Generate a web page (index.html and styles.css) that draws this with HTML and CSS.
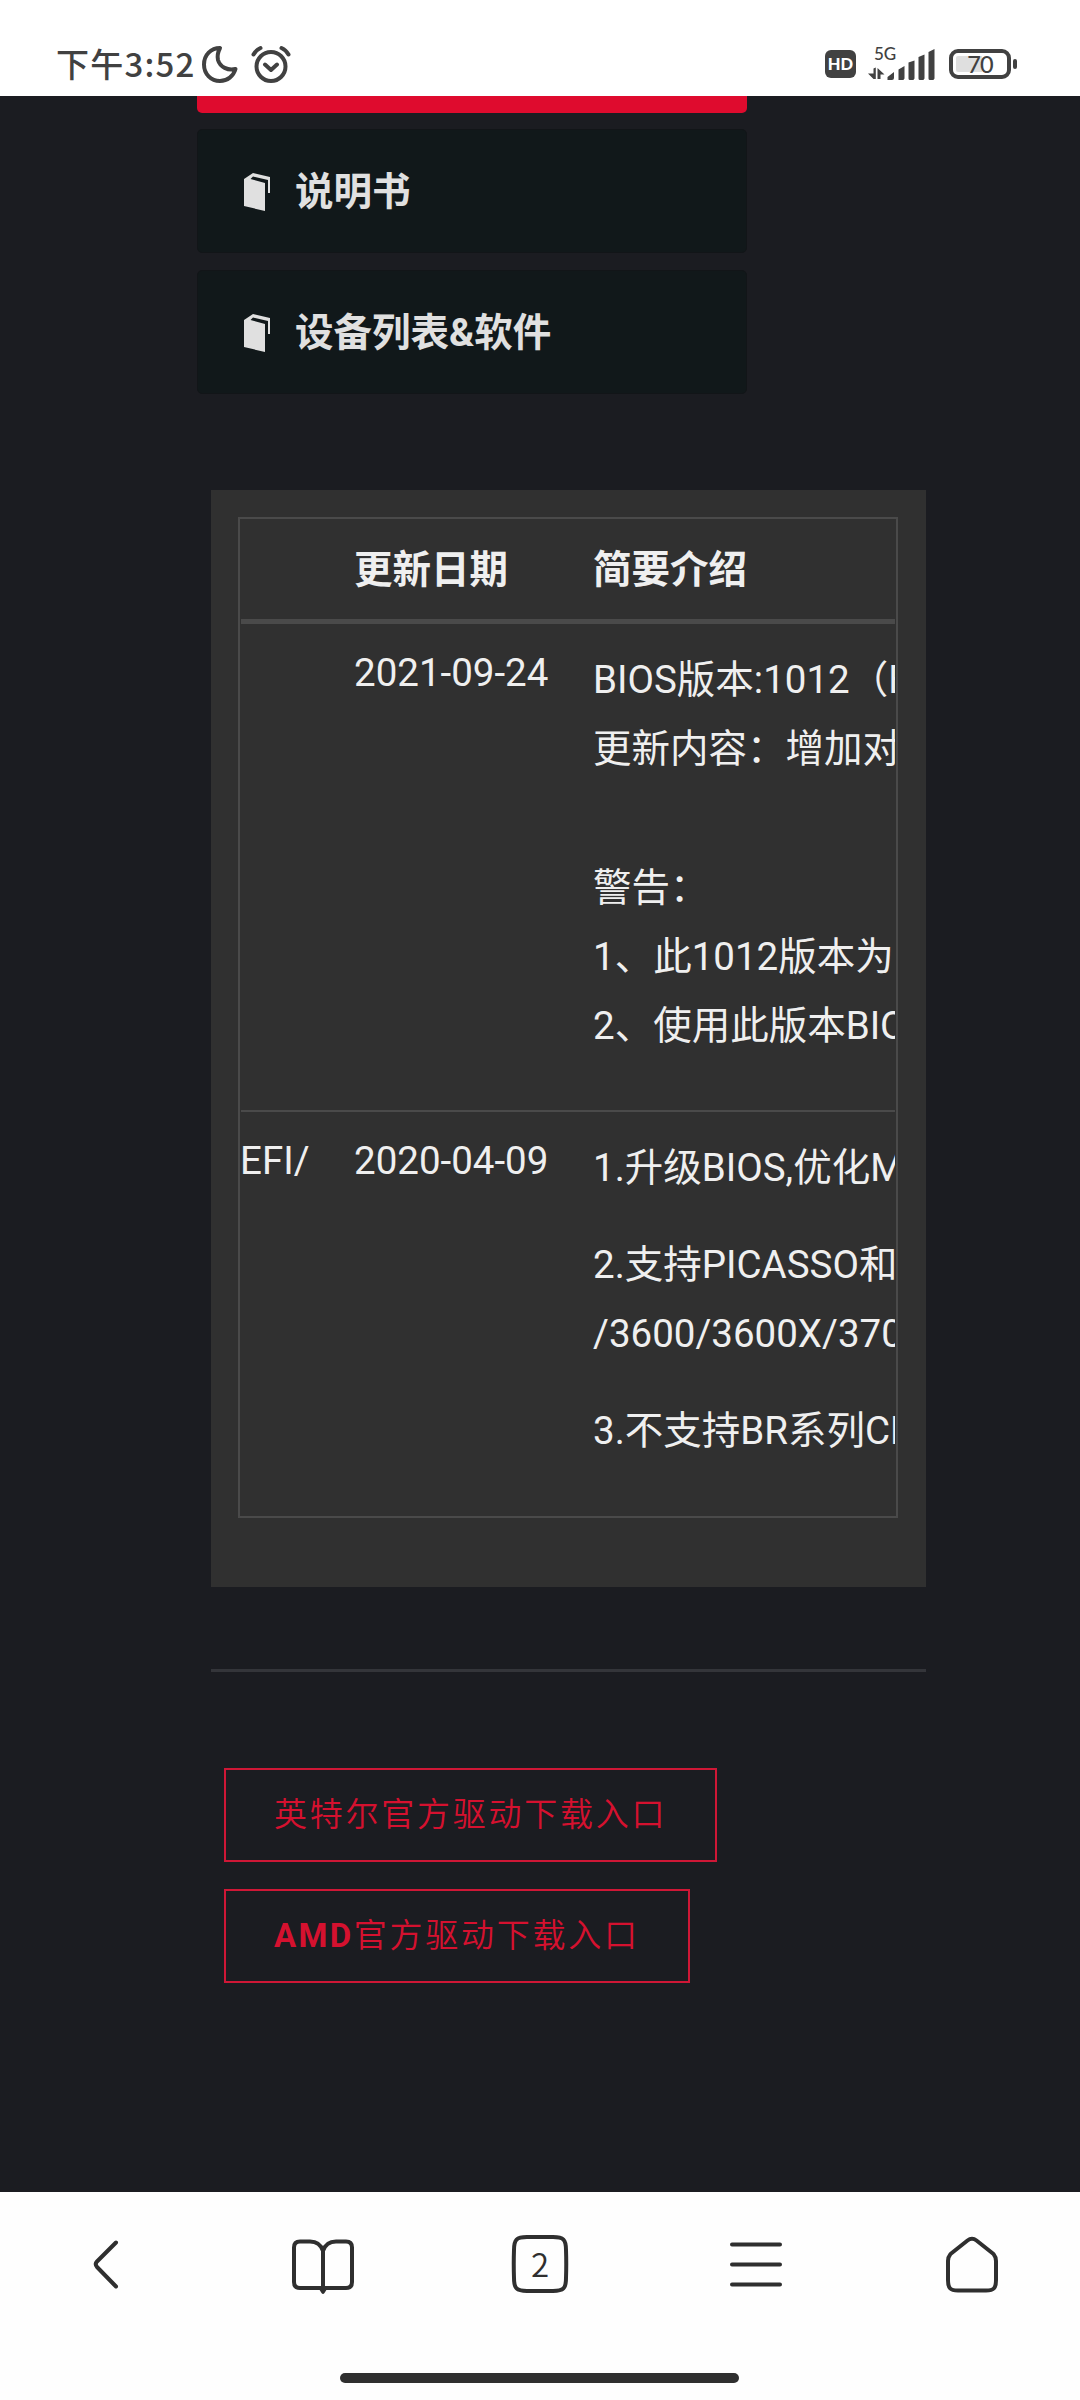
FILE: index.html
```html
<!DOCTYPE html>
<html lang="zh-CN">
<head>
<meta charset="utf-8">
<title>BIOS 下载</title>
<link rel="stylesheet" href="styles.css">
</head>
<body>
<header class="status">
  <span class="status-time">下午3:52</span>
  <svg class="status-moon" width="36" height="38" viewBox="0 0 36 38"><path d="M18 3C9 3 2 10 2 19.500C2 29 9 36 18 36C25.500 36 31.500 31 33.500 24C26 26 18 22 16 15C15 11 16 7 18 3Z"/></svg>
  <svg class="status-alarm" width="40" height="38" viewBox="0 0 40 38"><circle cx="20" cy="21.500" r="14.500"/><path d="M14 19.500L20 25L26 19.500M2.500 9.500Q5 5 9.500 3M37.500 9.500Q35 5 30.500 3"/></svg>
  <div class="status-right">
    <span class="hd">HD</span>
    <svg class="signal" width="70" height="36" viewBox="0 0 70 36">
      <text x="7" y="15.500" class="net">5G</text>
      <path d="M6.500 24.500V35H8.800V23.500ZM1 29.500L6.500 35V29.500ZM10.500 24V35H13.500V30.500H17.500Z"/>
      <path d="M20.500 36V33L27 28V34Q27 36 25 36ZM31.500 36V25.500L37.500 22V34.500Q37 36 35.500 36ZM41.500 34.500V18.500L47.500 16.500V34.500Q47 36 45.500 36H43Q41.500 36 41.500 34.500ZM51.500 34.500V13L57.500 10.500V34.500Q57 36 55.500 36H53Q51.500 36 51.500 34.500ZM61.500 34.500V8L67.500 5V34.500Q67 36 65.500 36H63Q61.500 36 61.500 34.500Z"/>
    </svg>
    <span class="battery"><span>70</span></span>
    <span class="nub"></span>
  </div>
</header>

<main class="page">
  <nav class="tabs">
    <div class="tab tab-active"></div>
    <div class="tab"><svg width="26" height="38" viewBox="0 0 26 38"><path d="M0 6L9 0L26 4V20H24V7L9 3.500L6.500 6L21 10V38L0 33Z"/></svg><span>说明书</span></div>
    <div class="tab"><svg width="26" height="38" viewBox="0 0 26 38"><path d="M0 6L9 0L26 4V20H24V7L9 3.500L6.500 6L21 10V38L0 33Z"/></svg><span>设备列表&amp;软件</span></div>
  </nav>

  <section class="panel">
    <div class="frame">
      <div class="scroller">
        <table class="releases">
          <colgroup><col class="col-name"><col class="col-date"><col class="col-info"></colgroup>
          <thead>
            <tr><th></th><th>更新日期</th><th>简要介绍</th></tr>
          </thead>
          <tbody>
            <tr class="row-first">
              <td></td>
              <td>2021-09-24</td>
              <td><p>BIOS版本:1012（BETA）<br>更新内容：增加对<br><br>警告：<br>1、此1012版本为<br>2、使用此版本BIOS</p></td>
            </tr>
            <tr class="row-second">
              <td>EFI/</td>
              <td>2020-04-09</td>
              <td><p>1.升级BIOS,优化M</p><p>2.支持PICASSO和<br>/3600/3600X/3700</p><p>3.不支持BR系列CPU</p></td>
            </tr>
          </tbody>
        </table>
      </div>
    </div>
  </section>

  <hr class="rule">

  <div class="links">
    <a class="link">英特尔官方驱动下载入口</a>
    <a class="link"><b>AMD</b>官方驱动下载入口</a>
  </div>
</main>

<footer class="browser-bar">
  <div class="actions">
    <span><svg width="62" height="62" viewBox="0 0 62 62"><path d="M39 9.500L20 28.500Q17.500 31 20 34L39 53.500"/></svg></span>
    <span><svg width="64" height="62" viewBox="1 0 64 62"><path d="M32 55V18Q29 8.500 19 8.500H9Q3 8.500 3 14.500V49Q3 55 9 55H55Q61 55 61 49V14.500Q61 8.500 55 8.500H45Q35 8.500 32 18"/><path class="solid" d="M28 56H36L33.500 60Q32 62 30.500 60Z"/></svg></span>
    <span><svg width="62" height="62" viewBox="0 0 62 62"><path d="M31 4H44C54.500 4 57 6.500 57 17Q57.500 31 57 45C57 55.500 54.500 58 44 58H18C7.500 58 5 55.500 5 45Q4.500 31 5 17C5 6.500 7.500 4 18 4Z"/><text x="31" y="44" class="count">2</text></svg></span>
    <span><svg width="62" height="62" viewBox="0 0 62 62"><path d="M7 11.500H55M7 31.500H55M7 51.500H55"/></svg></span>
    <span><svg width="62" height="62" viewBox="0 0 62 62"><path d="M26.500 7.500Q31 4 35.500 7.500L52.500 21Q55 24 55 28V47C55 55 53 57.500 45 57.500H17C9 57.500 7 55 7 47V28Q7 24 9.500 21Z"/></svg></span>
  </div>
  <div class="gesture"></div>
</footer>
</body>
</html>
```
FILE: styles.css
```css
* { box-sizing: border-box; }

body {
  margin: 0;
  width: 1080px;
  height: 2400px;
  display: flex;
  flex-direction: column;
  overflow: hidden;
  background: #1b1c21;
  color: #efefef;
  font-family: Roboto, "Noto Sans CJK SC", sans-serif;
  font-size: 38.5px;
}

svg { display: block; flex: none; }

/* System status bar */
.status {
  flex: none;
  height: 96px;
  padding: 31px 63px 0 56px;
  display: flex;
  align-items: center;
  background: #fff;
  color: #414141;
}
.status-time {
  width: 146px;
  padding-bottom: 2px;
  font: 500 33px/60px "Noto Sans CJK SC", sans-serif;
  letter-spacing: 1.2px;
  white-space: nowrap;
}
.status-moon, .status-alarm {
  fill: none;
  stroke: #414141;
  stroke-width: 4;
  stroke-linejoin: round;
  stroke-linecap: round;
}
.status-alarm { margin-left: 13px; }
.status-right { display: flex; align-items: center; margin-left: auto; }
.hd {
  width: 31px;
  height: 28px;
  border-radius: 6px;
  background: #414141;
  color: #fff;
  font: 900 16.500px/29px Lato, sans-serif;
  text-align: center;
}
.signal { margin-left: 11px; fill: #414141; margin-top: -4px; }
.net { font: 500 17px Lato, sans-serif; }
.battery {
  width: 62px;
  height: 30px;
  margin-left: 12px;
  padding: 3px;
  border: 4px solid #414141;
  border-radius: 9px;
}
.battery span {
  display: block;
  height: 16px;
  border-radius: 2px;
  background: linear-gradient(90deg, #dfdfdf 55%, #fff 55%);
  font: 500 23.500px/17px Lato, sans-serif;
  letter-spacing: -1px;
  text-align: center;
}
.nub { width: 4px; height: 10px; margin-left: 2px; border-radius: 2px; background: #414141; }

/* Web page */
.page { flex: 1; min-height: 0; padding-left: 197px; }
.tabs { display: flex; flex-direction: column; gap: 17px; width: 550px; }
.tab {
  height: 124px;
  padding-left: 46px;
  display: flex;
  align-items: center;
  gap: 25px;
  border: 1px solid #121518;
  border-radius: 5px;
  background: #11181a;
  color: #e0e0e0;
  font-weight: 700;
}
.tab svg { fill: #e0e0e0; margin-top: 2px; }
.tab span { padding-bottom: 6px; }
.tab-active {
  height: 17px;
  margin-bottom: -1px;
  border: 0;
  border-radius: 0 0 5px 5px;
  background: #df0b2e;
}

.panel {
  width: 715px;
  height: 1097px;
  margin: 96px 0 0 14px;
  padding: 27px;
  background: #303030;
}
.frame {
  width: 660px;
  height: 1001px;
  padding: 0 1px;
  border: 2px solid #4a4a4a;
}
.scroller { height: 997px; overflow: hidden; }
.releases {
  width: 658px;
  table-layout: fixed;
  border-collapse: separate;
  border-spacing: 0;
  white-space: nowrap;
}
.col-name { width: 91px; }
.col-date { width: 239px; }
.col-info { width: 328px; }
.releases th, .releases td {
  padding: 0 22px;
  text-align: left;
  vertical-align: top;
}
.releases th {
  height: 105px;
  padding-bottom: 7px;
  vertical-align: middle;
  border-bottom: 5px solid #4a4a4a;
}
.releases td {
  padding-top: 21px;
  line-height: 55px;
}
.releases td:first-child { padding: 21px 0 0; text-indent: -1px; }
.releases td:last-child { line-height: 69.200px; padding-right: 0; }
.row-first { height: 488px; }
.row-first td { border-bottom: 2px solid #4a4a4a; }
.releases p { margin: 0 0 27.500px; }

.rule {
  width: 715px;
  height: 3px;
  margin: 82px 0 0 14px;
  border: 0;
  background: #34353a;
}
.links {
  display: flex;
  flex-direction: column;
  align-items: flex-start;
  gap: 27px;
  margin: 96px 0 0 27px;
}
.link {
  height: 94px;
  padding: 0 48px;
  border: 2px solid #cf1736;
  color: #d5112f;
  font-size: 33px;
  font-weight: 350;
  line-height: 89px;
  letter-spacing: 2.750px;
  white-space: nowrap;
}
.link b { font-weight: 700; letter-spacing: 2.400px; }

/* Browser toolbar */
.browser-bar {
  flex: none;
  height: 208px;
  padding-top: 41px;
  background: #fefefe;
}
.actions { display: grid; grid-template-columns: repeat(5, 1fr); justify-items: center; }
.actions svg { fill: none; stroke: #2f2f2f; stroke-width: 4; stroke-linecap: round; stroke-linejoin: round; }
.actions .solid { fill: #2f2f2f; stroke: none; }
.actions .count { fill: #2f2f2f; stroke: none; font: 350 33px "Noto Sans CJK SC", sans-serif; text-anchor: middle; }
.gesture { width: 399px; height: 10px; margin: 78px 0 0 340px; border-radius: 5px; background: #2f2f2f; }
```
